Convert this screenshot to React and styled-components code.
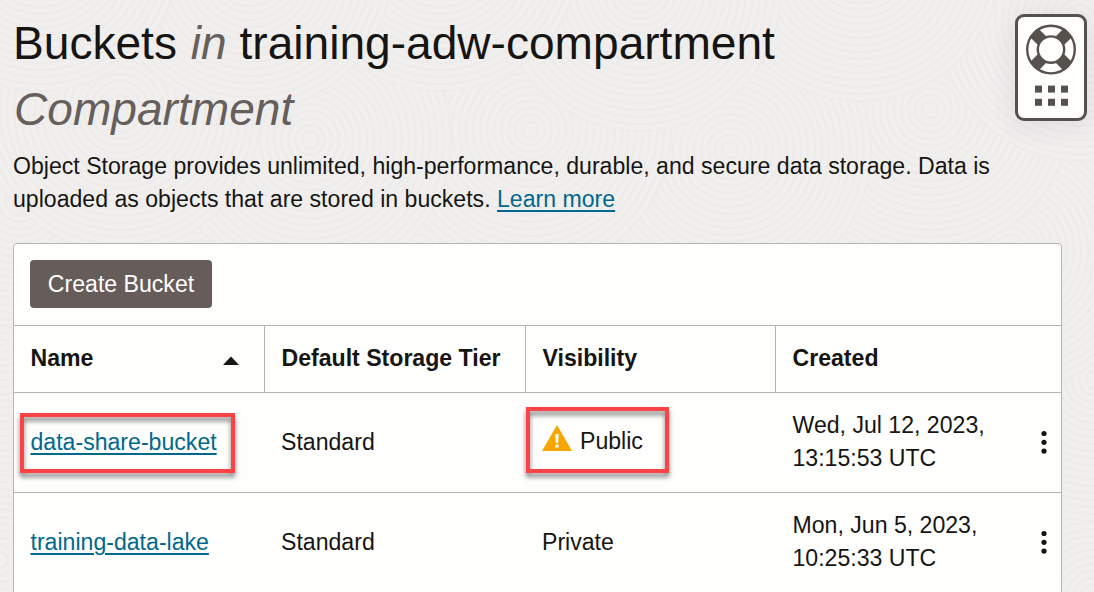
import React from "react";
import styled, { createGlobalStyle } from "styled-components";

const Global = createGlobalStyle`
  *, *::before, *::after { box-sizing: border-box; }
  body {
    margin: 0;
    overflow: hidden;
    background: #f1efee;
    color: #161513;
    font-family: "Liberation Sans", Arial, sans-serif;
    font-size: 23.1px;
    line-height: 33px;
  }
`;

const Page = styled.main`
  position: relative;
  height: 592px;
  overflow: hidden;
  padding: 10px 7px 0 13px;
`;

const Backdrop = styled.svg`
  position: absolute;
  inset: 0;
  z-index: -1;
`;

const Header = styled.header`
  display: flex;
  justify-content: space-between;
  align-items: flex-start;
`;

const Intro = styled.div`
  width: 985px;
`;

const Title = styled.h1`
  margin: 0;
  width: 900px;
  font-size: 46.1px;
  line-height: 66px;
  font-weight: 400;
`;

const Muted = styled.em`
  color: #665f5b;
  padding-left: 1px;
`;

const Description = styled.p`
  margin: 8px 0 0;
`;

const Link = styled.a`
  color: #00688c;
  text-decoration: underline;
  text-decoration-thickness: 2px;
  text-underline-offset: 3px;
`;

const HelpWidget = styled.button`
  display: flex;
  flex: none;
  width: 72px;
  height: 107px;
  margin: 3.5px 0 0;
  padding: 0;
  border: 3px solid #56514d;
  border-radius: 9px;
  background: #fefefc;
  box-shadow: 0 4px 24px rgba(60, 60, 80, 0.11);
`;

const Panel = styled.section`
  width: 1049px;
  height: 360px;
  margin-top: 27px;
  border: 1px solid #b8b4b0;
  border-radius: 4px 4px 0 0;
  background: #fefefc;
`;

const Toolbar = styled.div`
  height: 82px;
  padding: 16px;
  border-bottom: 1px solid #b8b4b0;
`;

const PrimaryButton = styled.button`
  width: 182px;
  height: 48px;
  padding: 1px 0 0;
  border: 0;
  border-radius: 4px;
  background: #665d5a;
  color: #fff;
  font: inherit;
  white-space: nowrap;
`;

const Row = styled.div`
  display: grid;
  grid-template-columns: 251px 261px 250px 1fr;
  height: ${(p) => (p.$head ? "67px" : "100px")};
  border-bottom: 1px solid #b8b4b0;
`;

const Cell = styled.div`
  position: relative;
  display: flex;
  align-items: center;
  padding: 0 16px;
  white-space: nowrap;
`;

const NameCell = styled(Cell)`
  padding-left: 16.5px;
`;

const HeadCell = styled(Cell)`
  justify-content: space-between;
  padding: 0 25.5px 2px 16.5px;
  border-right: 1px solid #b8b4b0;
  font-weight: 700;
  &:last-child { border-right: 0; }
`;

const CreatedCell = styled(Cell)`
  justify-content: space-between;
  padding: 0 13px 2px 16.5px;
`;

const Status = styled.span`
  display: flex;
  align-items: flex-start;
  gap: 8px;
  padding-bottom: 2px;
`;

const Highlight = styled.span`
  position: absolute;
  left: ${(p) => p.$x}px;
  top: ${(p) => p.$y}px;
  width: ${(p) => p.$w}px;
  height: ${(p) => p.$h}px;
  border: 4px solid #ff4245;
  filter: drop-shadow(0 4px 2.5px rgba(0, 0, 0, 0.5));
  pointer-events: none;
`;

const SortArrow = styled.svg`
  margin-top: 4px;
`;

const RING_CENTERS = [
  [0, 560], [1094, 600], [1094, 380], [0, 330],
  [1010, 250], [840, 260], [620, 290], [420, 250], [200, 290], [20, 200],
  [930, 110], [730, 150], [530, 130], [310, 140], [120, 110],
  [1080, 20], [860, -40], [640, -10], [440, -50], [250, -30], [40, -50],
];

function Texture() {
  return (
    <Backdrop width="1094" height="592">
      {RING_CENTERS.map(([cx, cy], i) => (
        <g key={i} fill="none" stroke="#edebea" strokeWidth="2">
          <circle cx={cx} cy={cy} r="142" fill="#f1efee" stroke="none" />
          {Array.from({ length: 20 }, (_, n) => (
            <circle key={n} cx={cx} cy={cy} r={8 + n * 7} />
          ))}
        </g>
      ))}
    </Backdrop>
  );
}

function HelpIcon() {
  return (
    <svg width="66" height="101" viewBox="0 0 66 101">
      <g fill="none" stroke="#56514d">
        <path
          strokeWidth="12"
          d="M24 23.6 16.6 16.2M42 23.6 49.4 16.2M24 41.6 16.6 49M42 41.6 49.4 49"
        />
        <circle cx="33" cy="32.6" r="23.8" strokeWidth="2.4" />
        <circle cx="33" cy="32.6" r="13.2" strokeWidth="2.4" fill="#fefefc" />
      </g>
      <g fill="#56514d">
        {[68.6, 81.8].map((y) =>
          [17, 30, 43].map((x) => <rect key={`${x}-${y}`} x={x} y={y} width="7" height="7" />)
        )}
      </g>
    </svg>
  );
}

function SortIcon() {
  return (
    <SortArrow width="16" height="9" viewBox="0 0 16 9">
      <path d="M0 9 8 .5 16 9Z" fill="#161513" />
    </SortArrow>
  );
}

function WarningIcon() {
  return (
    <svg width="30" height="26" viewBox="0 0 30 26">
      <path d="M15 0 30 26H0Z" fill="#f7a500" />
      <path d="M13.2 9h3.6l-.6 9h-2.4zM13.3 19.6h3.4v3h-3.4z" fill="#fffaf0" />
    </svg>
  );
}

function ActionsIcon() {
  return (
    <svg width="8" height="24" viewBox="0 0 8 24" fill="#161513">
      <circle cx="4" cy="3.5" r="2.6" />
      <circle cx="4" cy="12.3" r="2.6" />
      <circle cx="4" cy="21.1" r="2.6" />
    </svg>
  );
}

const BUCKETS = [
  { name: "data-share-bucket", isPublic: true, date: "Wed, Jul 12, 2023,", time: "13:15:53 UTC" },
  { name: "training-data-lake", isPublic: false, date: "Mon, Jun 5, 2023,", time: "10:25:33 UTC" },
];

function BucketRow({ bucket }) {
  return (
    <Row>
      <NameCell>
        <Link>{bucket.name}</Link>
        {bucket.isPublic && <Highlight $x={6} $y={20} $w={215} $h={60} />}
      </NameCell>
      <Cell>Standard</Cell>
      <Cell>
        {bucket.isPublic ? (
          <Status>
            <WarningIcon />
            Public
          </Status>
        ) : (
          "Private"
        )}
        {bucket.isPublic && <Highlight $x={0} $y={14} $w={143} $h={66} />}
      </Cell>
      <CreatedCell>
        <span>
          {bucket.date}
          <br />
          {bucket.time}
        </span>
        <ActionsIcon />
      </CreatedCell>
    </Row>
  );
}

export default function App() {
  return (
    <>
      <Global />
      <Page>
        <Texture />
        <Header>
          <Intro>
            <Title>
              Buckets <Muted>in</Muted> training-adw-compartment
              <br />
              <Muted>Compartment</Muted>
            </Title>
            <Description>
              Object Storage provides unlimited, high-performance, durable, and secure data storage. Data is
              <br />
              uploaded as objects that are stored in buckets. <Link>Learn more</Link>
            </Description>
          </Intro>
          <HelpWidget aria-label="Help">
            <HelpIcon />
          </HelpWidget>
        </Header>
        <Panel>
          <Toolbar>
            <PrimaryButton>Create Bucket</PrimaryButton>
          </Toolbar>
          <Row $head>
            <HeadCell>
              Name
              <SortIcon />
            </HeadCell>
            <HeadCell>Default Storage Tier</HeadCell>
            <HeadCell>Visibility</HeadCell>
            <HeadCell>Created</HeadCell>
          </Row>
          {BUCKETS.map((b) => (
            <BucketRow key={b.name} bucket={b} />
          ))}
        </Panel>
      </Page>
    </>
  );
}
